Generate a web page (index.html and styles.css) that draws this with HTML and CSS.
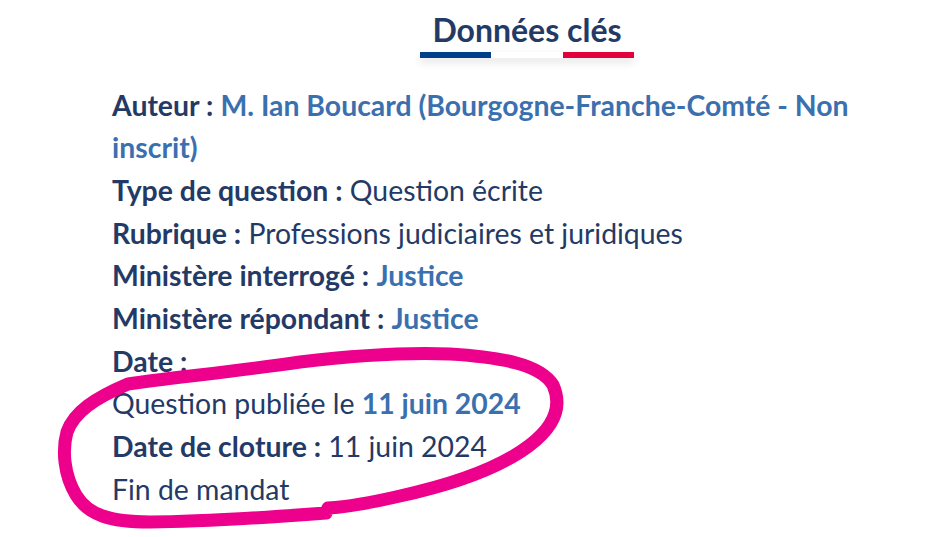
FILE: index.html
```html
<!DOCTYPE html>
<html lang="fr">
<head>
<meta charset="utf-8">
<title>Données clés</title>
<link rel="stylesheet" href="styles.css">
</head>
<body>
<div class="page">
  <div class="title-row">
    <h2 class="title">
      <span class="title-text">Données clés</span>
      <span class="tricolor"><span class="blue"></span><span class="white"></span><span class="red"></span></span>
    </h2>
  </div>
  <ul class="facts">
    <li><b>Auteur :</b> <a class="link" href="#">M. Ian Boucard (Bourgogne-Franche-Comté - Non inscrit)</a></li>
    <li><b>Type de question :</b> Question écrite</li>
    <li><b>Rubrique :</b> Professions judiciaires et juridiques</li>
    <li><b>Ministère interrogé :</b> <a class="link" href="#">Justice</a></li>
    <li><b>Ministère répondant :</b> <a class="link" href="#">Justice</a></li>
    <li><b>Date :</b></li>
    <li>Question publiée le <a class="link" href="#">11 juin 2024</a></li>
    <li><b>Date de cloture :</b> 11 juin 2024</li>
    <li>Fin de mandat</li>
  </ul>
</div>
<svg class="scribble" width="937" height="537" viewBox="0 0 937 537" xmlns="http://www.w3.org/2000/svg">
  <path d="M128 384 C 170 378, 230 372, 300 362 C 350 356, 400 352, 450 354 C 500 357, 540 364, 553 385 C 562 405, 556 425, 530 445 C 500 468, 450 485, 400 496 C 370 503, 345 507, 328 508 L 326 513 C 260 518, 200 522, 150 522 C 110 522, 88 515, 76 495 C 64 475, 62 450, 67 432 C 74 412, 95 398, 128 384 Z" fill="none" stroke="#ec008c" stroke-width="13" stroke-linejoin="round" stroke-linecap="round"/>
</svg>
</body>
</html>
```
FILE: styles.css
```css
html, body {
  margin: 0;
  padding: 0;
  background: #ffffff;
  overflow: hidden;
}
body {
  font-family: Lato, "Open Sans", sans-serif;
  color: #243a66;
  width: 937px;
  height: 537px;
  position: relative;
}
.page {
  padding: 11px 0 0 112px;
}
.title-row {
  width: 830px;
  display: flex;
  justify-content: center;
}
.title {
  margin: 0;
  display: inline-flex;
  flex-direction: column;
  align-items: stretch;
  font-size: 32px;
  font-weight: 700;
  line-height: 38px;
  color: #243a66;
}
.title-text {
  padding: 0 12px 3px;
  text-align: center;
}
.tricolor {
  display: flex;
  height: 6px;
  box-shadow: 0 4px 8px rgba(0, 0, 0, 0.12);
}
.tricolor span {
  flex: 1;
}
.tricolor .blue { background: #003f8c; }
.tricolor .white { background: #ffffff; }
.tricolor .red { background: #e1003c; }
.facts {
  list-style: none;
  margin: 25.5px 0 0;
  padding: 0;
  width: 760px;
  font-size: 28.4px;
  line-height: 42.7px;
}
.facts b {
  font-weight: 700;
}
.link {
  color: #3b70af;
  font-weight: 700;
  text-decoration: none;
}
.scribble {
  position: absolute;
  left: 0;
  top: 0;
  pointer-events: none;
}
```
